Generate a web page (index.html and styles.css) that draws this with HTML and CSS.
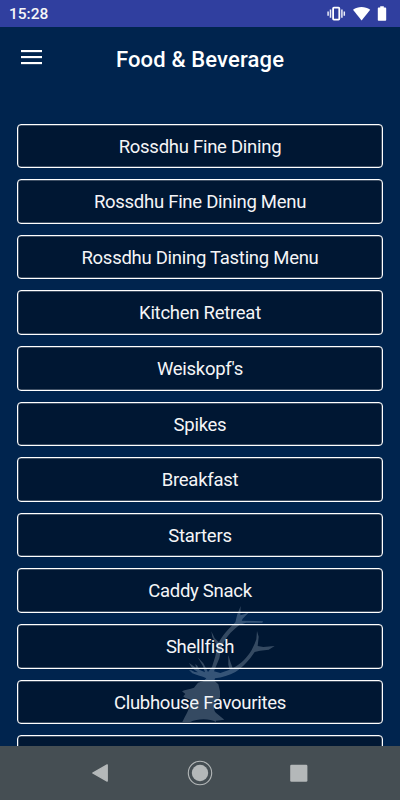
FILE: index.html
```html
<!DOCTYPE html>
<html lang="en">
<head>
<meta charset="UTF-8">
<meta name="viewport" content="width=device-width, initial-scale=1.0">
<title>Food &amp; Beverage</title>
<link rel="stylesheet" href="styles.css">
</head>
<body>

<div class="screen">
    <div class="status-bar">
        <span class="time">15:28</span>
        <svg class="status-icons" width="60" height="16" viewBox="0 0 60 16">
            <!-- vibrate -->
            <rect x="6.1" y="1.6" width="6.2" height="12" rx="0.8" fill="none" stroke="#fff" stroke-width="1.8"/>
            <path d="M3.5 3.4v8.4M14.9 3.4v8.4M1.1 5.4v4.4M17.3 5.4v4.4" stroke="#eceef9" stroke-width="1.5"/>
            <!-- wifi -->
            <path d="M26 3.7C31 0.2 38 0.2 43.2 3.7L34.6 14.6Z" fill="#fff"/>
            <!-- battery -->
            <path d="M53.2 0.2h3.6v1.4h1.6q.8 0 .8.8v11.6q0 .8-.8.8h-6.8q-.8 0-.8-.8V2.4q0-.8.8-.8h1.6z" fill="#fff"/>
        </svg>
    </div>

    <div class="header">
        <button class="menu-btn" type="button" aria-label="Menu">
            <span></span>
            <span></span>
            <span></span>
        </button>
        <h1>Food &amp; Beverage</h1>
    </div>

    <div class="content">
        <ul class="menu-list">
            <li>Rossdhu Fine Dining</li>
            <li>Rossdhu Fine Dining Menu</li>
            <li>Rossdhu Dining Tasting Menu</li>
            <li>Kitchen Retreat</li>
            <li>Weiskopf's</li>
            <li>Spikes</li>
            <li>Breakfast</li>
            <li>Starters</li>
            <li>Caddy Snack</li>
            <li>Shellfish</li>
            <li>Clubhouse Favourites</li>
            <li></li>
        </ul>
        <!-- stag watermark -->
        <svg class="stag" width="130" height="160" viewBox="0 0 390 480">
            <path fill="#e6f4ff" d="M67 381C76 362 88 343 91 326L92 316C85 310 74 311 70 304L76 297L66 289C75 283 90 283 102 278L114 263L130 259L139 250C126 244 110 240 97 235L87 225L94 226L104 231L114 232L104 225L94 216L87 204L96 210L108 218L106 207L112 212L118 224L135 232L129 214L113 187L130 205L144 231L156 216L166 184L172 154L157 126L154 109L164 130L177 142C187 123 205 101 226 82L232 58L242 33L241 61L252 58L267 52L248 71L245 77L309 79L307 83L258 83L239 89C219 104 202 121 192 140L183 163L178 190L162 229L181 234L209 224L205 209L205 180L211 200L218 219C244 207 262 187 275 165L284 146L289 133L291 108L296 125L293 153L310 156L344 153L326 164L300 167L284 171C267 196 251 215 226 231C208 241 187 247 165 250L163 257L175 268L180 289L180 307L167 323C158 338 162 351 173 358L193 374L168 377L168 381C150 370 110 371 91 381Z"/>
        </svg>
    </div>

    <div class="nav-bar">
        <svg width="20" height="20" viewBox="0 0 20 20">
            <path d="M2.8 10L17.2 1.9V18.1Z" fill="#b4b8b9" stroke="#b4b8b9" stroke-width="1.4" stroke-linejoin="round"/>
        </svg>
        <svg width="26" height="26" viewBox="0 0 26 26">
            <circle cx="13" cy="13" r="11.7" fill="none" stroke="#b4b8b9" stroke-width="1.1"/>
            <circle cx="13" cy="13" r="8.2" fill="#b4b8b9"/>
        </svg>
        <svg width="20" height="20" viewBox="0 0 20 20">
            <rect x="1.2" y="1.7" width="17.2" height="17" rx="1.3" fill="#b4b8b9"/>
        </svg>
    </div>
</div>

</body>
</html>
```
FILE: styles.css
```css
body {
    margin: 0;
    background-color: #00244e;
    font-family: Roboto, sans-serif;
    color: #f5f5f7;
}
.screen {
    display: flex;
    flex-direction: column;
    height: 800px;
    overflow: hidden;
}
.status-bar {
    display: flex;
    align-items: center;
    justify-content: space-between;
    box-sizing: border-box;
    height: 27px;
    padding: 0 13px 0 9px;
    background-color: #303f9f;
}
.time {
    font-size: 15.5px;
    font-weight: 500;
    line-height: 27px;
    padding-top: 1px;
}
.header {
    display: grid;
    grid-template-columns: 60px 1fr 60px;
    align-items: center;
    height: 62px;
}
.menu-btn {
    display: flex;
    flex-direction: column;
    gap: 4px;
    width: 21px;
    margin: 0 0 2px 21px;
    padding: 0;
    background: none;
    border: none;
}
.menu-btn span {
    height: 2px;
    background-color: #fff;
    box-shadow: 0 0.5px 0 rgba(255, 255, 255, 0.3);
}
h1 {
    margin: 3px 0 0;
    text-align: center;
    font-size: 22px;
    font-weight: 500;
    line-height: 28px;
    letter-spacing: 0.15px;
    color: #fff;
}
.content {
    position: relative;
    flex: 1;
    min-height: 0;
    overflow: hidden;
}
.menu-list {
    display: flex;
    flex-direction: column;
    gap: 11px;
    margin: 0;
    padding: 34.6px 17px 0;
    list-style-type: none;
}
.menu-list li {
    box-sizing: border-box;
    flex: none;
    height: 44.6px;
    border: 1px solid #fff;
    border-radius: 4px;
    box-shadow: inset 0 0 0 0.5px rgba(255, 255, 255, 0.5);
    background-color: #001733;
    text-align: center;
    font-size: 18.5px;
    line-height: 44px;
    letter-spacing: -0.27px;
}
.stag {
    position: absolute;
    left: 160px;
    top: 506px;
    opacity: 0.23;
    pointer-events: none;
}
.nav-bar {
    display: flex;
    align-items: center;
    justify-content: space-between;
    box-sizing: border-box;
    height: 54px;
    padding: 0 91px 0 90px;
    background-color: #454e53;
}
```
